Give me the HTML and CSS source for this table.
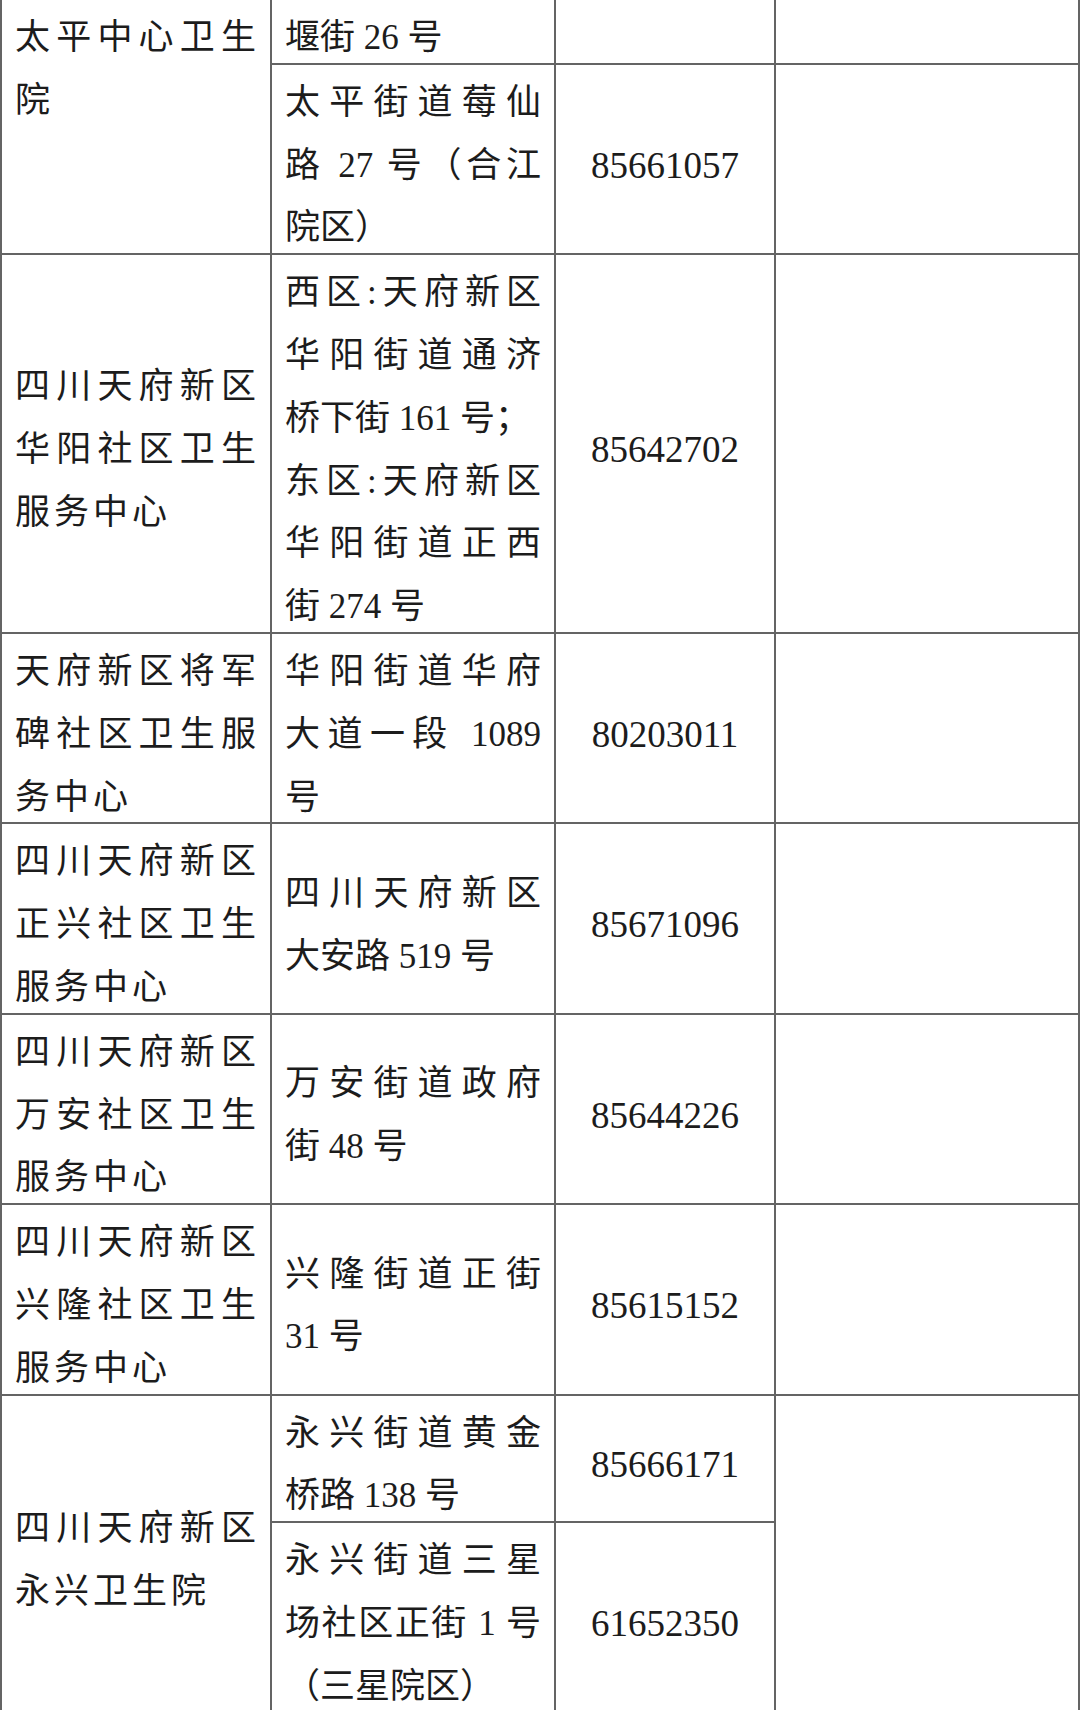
FILE: index.html
```html
<!DOCTYPE html>
<html lang="zh-CN">
<head>
<meta charset="utf-8">
<title>社区卫生服务中心</title>
<link rel="stylesheet" href="styles.css">
</head>
<body>
<div class="page">
<table class="tbl">
  <colgroup><col class="c1"><col class="c2"><col class="c3"><col class="c4"></colgroup>
  <tbody>
    <tr>
      <td class="name top" rowspan="2"><div class="t"><div class="j">太平中心卫生</div><div>院</div></div></td>
      <td class="addr"><div class="t">堰街 26 号</div></td>
      <td class="tel"></td>
      <td class="note"></td>
    </tr>
    <tr>
      <td class="addr"><div class="t"><div class="j">太平街道莓仙</div><div class="j">路 27 号（合江</div><div>院区）</div></div></td>
      <td class="tel"><div class="t">85661057</div></td>
      <td class="note"></td>
    </tr>
    <tr>
      <td class="name"><div class="t"><div class="j">四川天府新区</div><div class="j">华阳社区卫生</div><div>服务中心</div></div></td>
      <td class="addr"><div class="t"><div class="j">西区:天府新区</div><div class="j">华阳街道通济</div><div>桥下街 161 号；</div><div class="j">东区:天府新区</div><div class="j">华阳街道正西</div><div>街 274 号</div></div></td>
      <td class="tel"><div class="t">85642702</div></td>
      <td class="note"></td>
    </tr>
    <tr>
      <td class="name"><div class="t"><div class="j">天府新区将军</div><div class="j">碑社区卫生服</div><div>务中心</div></div></td>
      <td class="addr"><div class="t"><div class="j">华阳街道华府</div><div class="j">大道一段 1089</div><div>号</div></div></td>
      <td class="tel"><div class="t">80203011</div></td>
      <td class="note"></td>
    </tr>
    <tr>
      <td class="name"><div class="t"><div class="j">四川天府新区</div><div class="j">正兴社区卫生</div><div>服务中心</div></div></td>
      <td class="addr"><div class="t"><div class="j">四川天府新区</div><div>大安路 519 号</div></div></td>
      <td class="tel"><div class="t">85671096</div></td>
      <td class="note"></td>
    </tr>
    <tr>
      <td class="name"><div class="t"><div class="j">四川天府新区</div><div class="j">万安社区卫生</div><div>服务中心</div></div></td>
      <td class="addr"><div class="t"><div class="j">万安街道政府</div><div>街 48 号</div></div></td>
      <td class="tel"><div class="t">85644226</div></td>
      <td class="note"></td>
    </tr>
    <tr>
      <td class="name"><div class="t"><div class="j">四川天府新区</div><div class="j">兴隆社区卫生</div><div>服务中心</div></div></td>
      <td class="addr"><div class="t"><div class="j">兴隆街道正街</div><div>31 号</div></div></td>
      <td class="tel"><div class="t">85615152</div></td>
      <td class="note"></td>
    </tr>
    <tr>
      <td class="name" rowspan="2"><div class="t"><div class="j">四川天府新区</div><div>永兴卫生院</div></div></td>
      <td class="addr"><div class="t"><div class="j">永兴街道黄金</div><div>桥路 138 号</div></div></td>
      <td class="tel"><div class="t">85666171</div></td>
      <td class="note" rowspan="2"></td>
    </tr>
    <tr>
      <td class="addr"><div class="t"><div class="j">永兴街道三星</div><div class="j">场社区正街 1 号</div><div>（三星院区）</div></div></td>
      <td class="tel"><div class="t">61652350</div></td>
    </tr>
  </tbody>
</table>
</div>
</body>
</html>
```
FILE: styles.css
```css
html, body {
  margin: 0;
  padding: 0;
  background: #ffffff;
}

.page {
  width: 1080px;
  height: 1710px;
  overflow: hidden;
}

.tbl {
  border-collapse: collapse;
  table-layout: fixed;
  width: 1078px;
  margin-top: -2px;
  font-family: "Liberation Serif", "Noto Sans CJK SC", serif;
  font-size: 35px;
  font-weight: 400;
  line-height: 62.8px;
  color: #1c1c1c;
}

.c1 { width: 270px; }
.c2 { width: 284px; }
.c3 { width: 220px; }
.c4 { width: 304px; }

.tbl td {
  border: 2px solid #646464;
  padding: 0;
  vertical-align: middle;
}

.t {
  margin: 7px 0 -7px;
}

.j {
  text-align: justify;
  text-align-last: justify;
}

.tbl td.name {
  padding: 0 10px 0 13px;
  letter-spacing: 4px;
}

.tbl td.addr {
  padding: 0 13px;
}

.tbl td.tel {
  text-align: center;
  font-size: 37px;
}

.tbl td.top {
  vertical-align: top;
}
```
